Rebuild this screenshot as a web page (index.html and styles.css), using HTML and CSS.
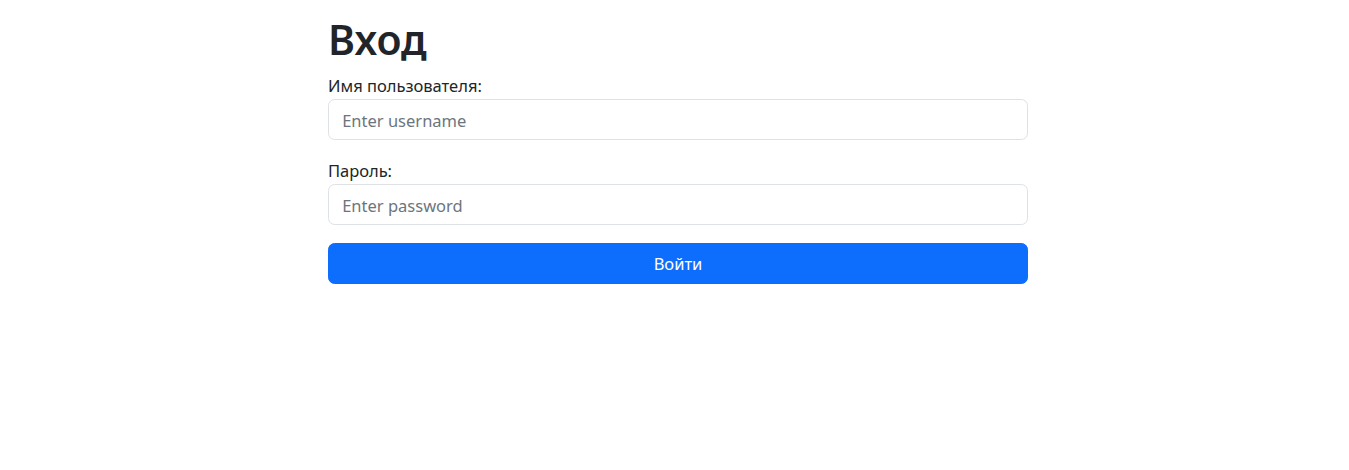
FILE: index.html
```html
<!DOCTYPE html>
<html lang="ru">
<head>
<meta charset="utf-8">
<title>Вход</title>
<link rel="stylesheet" href="styles.css">
</head>
<body>
<div class="page">
  <div class="container">
    <h1 class="title">Вход</h1>
    <form class="login">
      <div class="field">
        <label class="label" for="username">Имя пользователя:</label>
        <input class="control" id="username" type="text" placeholder="Enter username">
      </div>
      <div class="field">
        <label class="label" for="password">Пароль:</label>
        <input class="control" id="password" type="password" placeholder="Enter password">
      </div>
      <button class="btn" type="submit">Войти</button>
    </form>
  </div>
</div>
</body>
</html>
```

FILE: styles.css
```css
* { box-sizing: border-box; }
html, body { margin: 0; padding: 0; background: #fff; }
body {
  font-family: "Noto Sans", "Open Sans", "Liberation Sans", sans-serif;
  font-size: 16.5px;
  line-height: 26.4px;
  color: #212529;
}
.page {
  display: flex;
  justify-content: center;
  padding-top: 11px;
}
.container {
  width: 707px;
  padding-left: 7px;
}
.title {
  margin: 0 0 8.8px 0;
  font-size: 41px;
  font-weight: 600;
  line-height: 52.8px;
  padding-top: 2px;
  height: 52.8px;
}
.login { margin: 0; }
.field { margin-bottom: 17.6px; }
.label { display: inline-block; }
.control {
  display: block;
  width: 100%;
  height: 41px;
  padding: 7px 13.2px 6px;
  font-family: inherit;
  font-size: 16.5px;
  line-height: 26.4px;
  color: #212529;
  background: #fff;
  border: 1px solid #dee2e6;
  border-radius: 6.6px;
  outline: none;
}
.control::placeholder { color: #6c757d; opacity: 1; }
.btn {
  display: block;
  width: 100%;
  height: 41px;
  padding: 7px 13.2px 6px;
  font-family: inherit;
  font-size: 16.5px;
  line-height: 26.4px;
  color: #fff;
  background: #0d6efd;
  border: 1px solid #0d6efd;
  border-radius: 6.6px;
  cursor: pointer;
}
```
